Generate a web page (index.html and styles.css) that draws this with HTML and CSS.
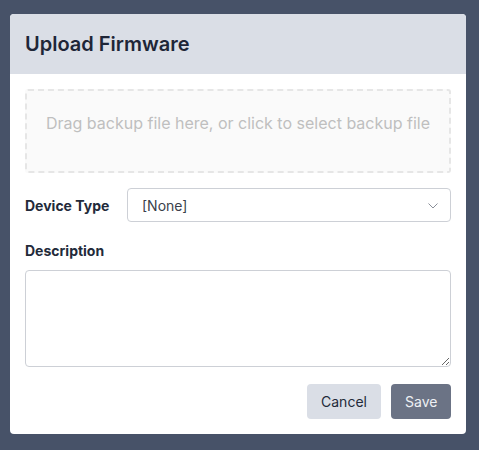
FILE: index.html
```html
<!DOCTYPE html>
<html>
<head>
<meta charset="utf-8">
<link rel="stylesheet" href="styles.css">
</head>
<body>
<div class="modal">
  <div class="modal-header"><h2 class="title">Upload Firmware</h2></div>
  <div class="modal-body">
    <div class="dropzone">Drag backup file here, or click to select backup file</div>
    <div class="row">
      <label class="label label-inline">Device Type</label>
      <div class="select">
        <span>[None]</span>
        <svg class="chev" width="10" height="6" viewBox="0 0 10 6"><path d="M0.5 0.5 L5 5 L9.5 0.5" fill="none" stroke="#8a8f99" stroke-width="1"/></svg>
      </div>
    </div>
    <label class="label label-block">Description</label>
    <textarea class="textarea"></textarea>
    <div class="actions">
      <button class="btn btn-cancel">Cancel</button>
      <button class="btn btn-save">Save</button>
    </div>
  </div>
</div>
</body>
</html>
```
FILE: styles.css
```css
* { box-sizing: border-box; }
html, body { margin: 0; padding: 0; }
body {
  background: #475268;
  font-family: Inter, "Noto Sans", sans-serif;
  width: 479px;
  height: 450px;
  padding: 14px 13px 0 10px;
}
.modal {
  background: #ffffff;
  border-radius: 4px;
  overflow: hidden;
  width: 456px;
  height: 420px;
  display: flex;
  flex-direction: column;
}
.modal-header {
  background: #dadee6;
  height: 60px;
  display: flex;
  align-items: center;
  padding: 0 15px;
}
.title {
  margin: 0;
  font-size: 20px;
  font-weight: 600;
  color: #1e2638;
}
.modal-body {
  padding: 15px 15px 15px 15px;
  display: flex;
  flex-direction: column;
}
.dropzone {
  height: 84px;
  border: 2px dashed #e6e6e6;
  border-radius: 3px;
  background: #fafafa;
  color: #bfbfbf;
  font-size: 16px;
  line-height: 20px;
  display: flex;
  align-items: flex-start;
  justify-content: center;
  padding-top: 22px;
}
.row {
  margin-top: 15px;
  display: flex;
  align-items: center;
}
.label {
  font-size: 14px;
  font-weight: 700;
  color: #232a3a;
}
.label-inline {
  width: 102px;
}
.select {
  flex: 1;
  height: 34px;
  border: 1px solid #cdd0d6;
  border-radius: 4px;
  display: flex;
  align-items: center;
  justify-content: space-between;
  padding: 0 12px 0 14px;
  font-size: 14px;
  color: #3a3f4a;
}
.chev { margin-top: 1px; }
.label-block {
  margin-top: 19px;
  line-height: 20px;
  display: block;
}
.textarea {
  margin-top: 9px;
  height: 97px;
  border: 1px solid #cdd0d6;
  border-radius: 4px;
  resize: vertical;
  font-family: inherit;
}
.actions {
  margin-top: 17px;
  display: flex;
  justify-content: flex-end;
  gap: 10px;
}
.btn {
  height: 35px;
  border: none;
  border-radius: 4px;
  font-family: inherit;
  font-size: 14px;
  padding: 0 14px;
}
.btn-cancel {
  background: #dadee6;
  color: #232a3a;
  width: 74px;
}
.btn-save {
  background: #6b7385;
  color: #eef0f4;
  width: 60px;
}
```
